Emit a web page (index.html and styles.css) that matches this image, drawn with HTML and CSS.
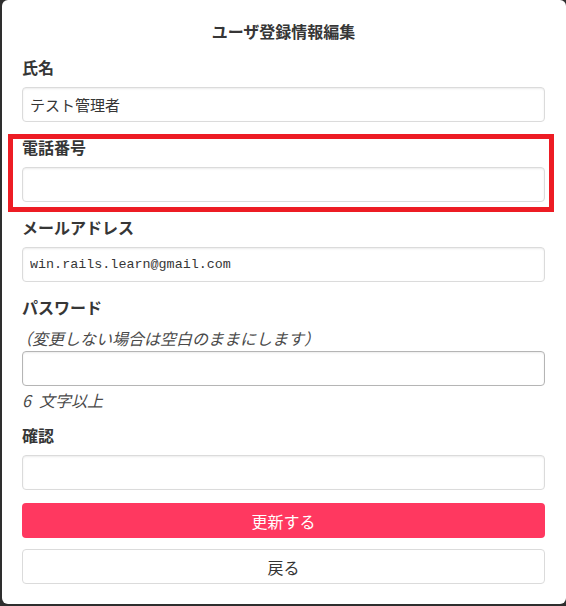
FILE: index.html
```html
<!DOCTYPE html>
<html lang="ja">
<head>
  <meta charset="UTF-8" />
  <title>ユーザ登録情報編集</title>
  <link rel="stylesheet" href="styles.css">
</head>
<body>

  <div class="card">
    <h1 class="title">ユーザ登録情報編集</h1>
    <form class="edit-form">
      <div class="field">
        <label class="label">氏名</label>
        <input class="input" type="text" value="テスト管理者" />
      </div>

      <div class="field">
        <label class="label">電話番号</label>
        <input class="input" type="tel" value="" />
      </div>

      <div class="field">
        <label class="label">メールアドレス</label>
        <input class="input mono" type="email" value="win.rails.learn@gmail.com" />
      </div>

      <div class="field">
        <label class="label">パスワード</label>
        <p class="hint hint-top">（変更しない場合は空白のままにします）</p>
        <input class="input input-hover" type="password" value="" />
        <p class="hint hint-bottom">6&ensp;文字以上</p>
      </div>

      <div class="field">
        <label class="label">確認</label>
        <input class="input" type="password" value="" />
      </div>

      <button type="submit" class="btn btn-danger">更新する</button>
      <button type="button" class="btn btn-back">戻る</button>
    </form>

    <div class="highlight"></div>
  </div>

</body>
</html>
```

FILE: styles.css
```css
html, body {
  margin: 0;
  height: 100%;
}

body {
  background: #2e2e2e;
  font-family: "Noto Sans CJK JP", "Noto Sans", sans-serif;
  color: #363636;
  overflow: hidden;
}

.card {
  position: relative;
  box-sizing: border-box;
  height: 604px;
  margin-left: 2px;
  background: #fff;
  border-radius: 6px;
  padding: 19px 21px 0 20px;
}

.title {
  margin: 0 0 12px;
  font-size: 16px;
  line-height: 24px;
  font-weight: bold;
  text-align: center;
  color: #363636;
}

.edit-form {
  display: flex;
  flex-direction: column;
}

.field {
  display: flex;
  flex-direction: column;
  margin-bottom: 13px;
}

.label {
  font-size: 16px;
  line-height: 24px;
  font-weight: bold;
  margin-bottom: 8px;
}

.input {
  box-sizing: border-box;
  height: 35px;
  width: 100%;
  padding: 0 7px;
  border: 1px solid #dbdbdb;
  border-radius: 4px;
  box-shadow: inset 0 1px 2px rgba(10,10,10,0.08);
  font-family: "Noto Sans CJK JP", sans-serif;
  font-size: 15px;
  color: #363636;
  background: #fff;
}

.input.mono {
  font-family: "Liberation Mono", monospace;
  font-size: 13.4px;
}

.input-hover {
  border-color: #b5b5b5;
}

.hint {
  margin: 0;
  font-size: 16px;
  line-height: 22px;
  font-style: italic;
  color: #4a4a4a;
}

.hint-top {
  margin-top: 0;
  margin-bottom: 2px;
  text-indent: -6px;
}

.hint-bottom {
  margin-top: 3px;
  margin-bottom: -1px;
}

.btn {
  box-sizing: border-box;
  height: 35px;
  width: 100%;
  border-radius: 4px;
  font-family: "Noto Sans CJK JP", sans-serif;
  font-size: 16px;
  cursor: pointer;
}

.btn-danger {
  margin-top: 0;
  background: #ff3860;
  border: none;
  color: #fff;
}

.btn-back {
  margin-top: 11px;
  background: #fff;
  border: 1px solid #dbdbdb;
  color: #363636;
}

.highlight {
  position: absolute;
  left: 6px;
  top: 134px;
  width: 546px;
  height: 78px;
  box-sizing: border-box;
  border: 5px solid #ed1c24;
  pointer-events: none;
}
```
